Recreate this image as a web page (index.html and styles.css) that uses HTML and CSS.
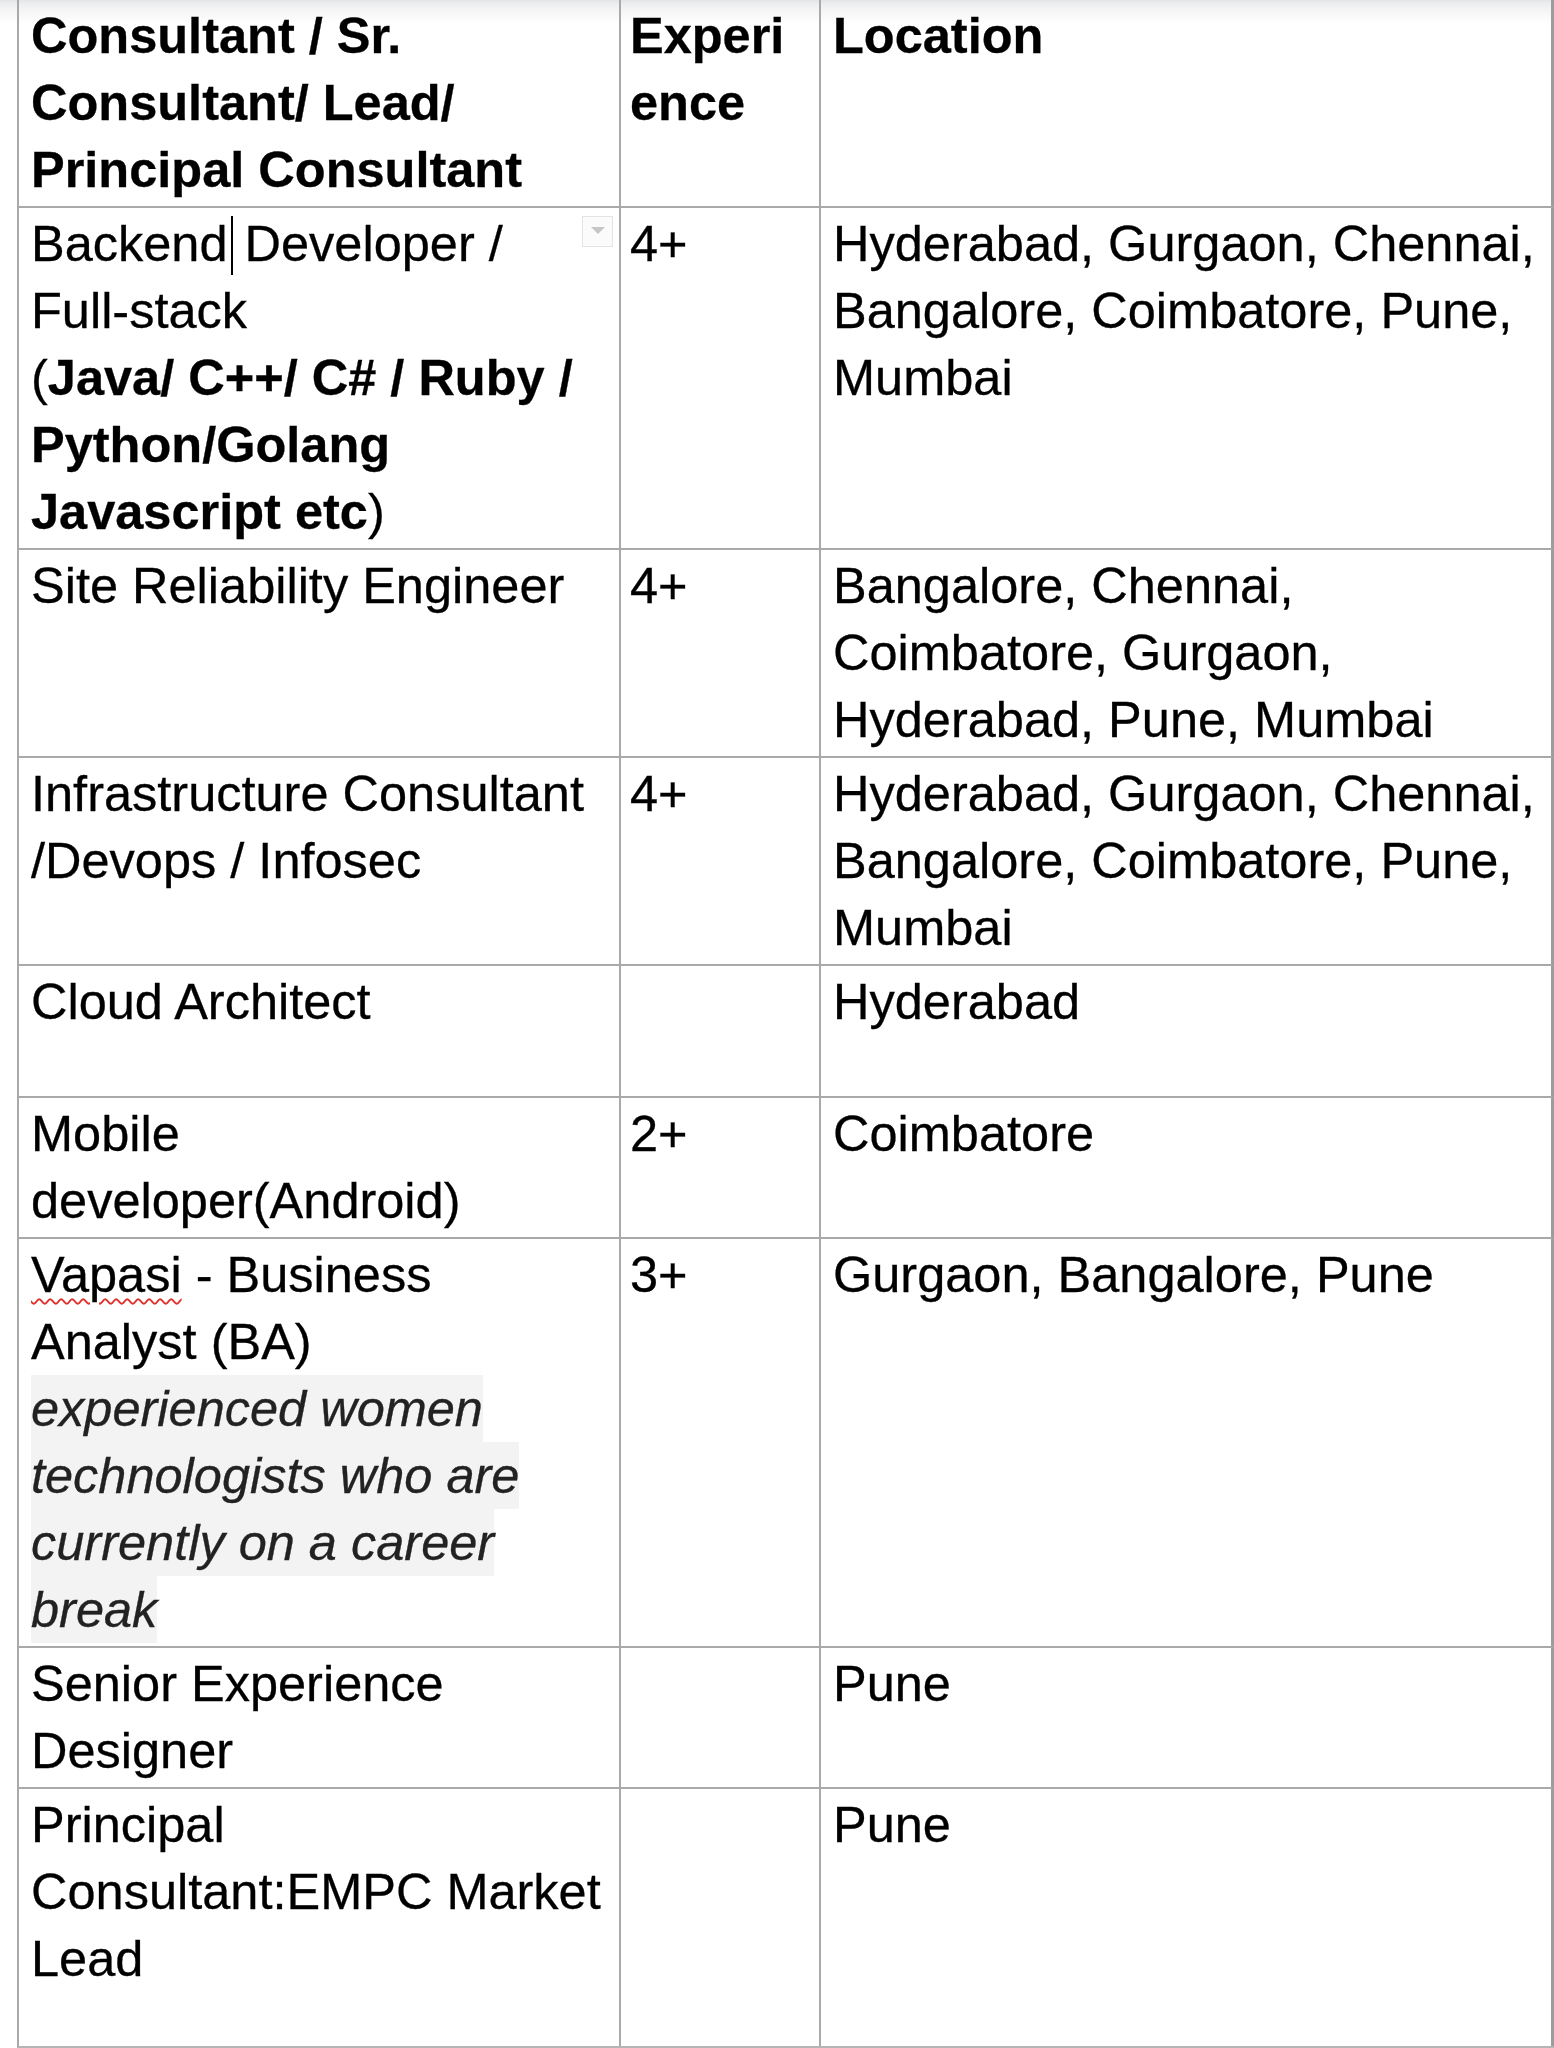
FILE: index.html
```html
<!DOCTYPE html>
<html lang="en">
<head>
<meta charset="utf-8">
<title>Openings</title>
<link rel="stylesheet" href="styles.css">
</head>
<body>
<div class="sheet">
  <div class="table">
    <div class="cell c1 head">Consultant / Sr. Consultant/ Lead/ Principal Consultant</div>
    <div class="cell c2 head break">Experience</div>
    <div class="cell c3 head">Location</div>

    <div class="cell c1 has-chip">
      <p>Backend<span class="caret"></span> Developer / Full-stack</p>
      <p>(<b>Java/ C++/ C# / Ruby / Python/Golang Javascript etc</b>)</p>
      <span class="chip"><span class="tri"></span></span>
    </div>
    <div class="cell c2">4+</div>
    <div class="cell c3">Hyderabad, Gurgaon, Chennai, Bangalore, Coimbatore, Pune, Mumbai</div>

    <div class="cell c1">Site Reliability Engineer</div>
    <div class="cell c2">4+</div>
    <div class="cell c3">Bangalore, Chennai, Coimbatore, Gurgaon, Hyderabad, Pune, Mumbai</div>

    <div class="cell c1">Infrastructure Consultant /Devops / Infosec</div>
    <div class="cell c2">4+</div>
    <div class="cell c3">Hyderabad, Gurgaon, Chennai, Bangalore, Coimbatore, Pune, Mumbai</div>

    <div class="cell c1"><p>Cloud Architect</p><p class="blank blank-a"></p></div>
    <div class="cell c2"></div>
    <div class="cell c3">Hyderabad</div>

    <div class="cell c1">Mobile developer(Android)</div>
    <div class="cell c2">2+</div>
    <div class="cell c3">Coimbatore</div>

    <div class="cell c1">
      <p><span class="spell">Vapasi</span> - Business Analyst (BA)</p>
      <p><span class="note">experienced women technologists who are currently on a career break</span></p>
    </div>
    <div class="cell c2">3+</div>
    <div class="cell c3">Gurgaon, Bangalore, Pune</div>

    <div class="cell c1">Senior Experience Designer</div>
    <div class="cell c2"></div>
    <div class="cell c3">Pune</div>

    <div class="cell c1"><p>Principal Consultant:EMPC Market Lead</p><p class="blank blank-b"></p></div>
    <div class="cell c2"></div>
    <div class="cell c3">Pune</div>
  </div>
</div>
</body>
</html>
```

FILE: styles.css
```css
* { box-sizing: border-box; }

html, body {
  margin: 0;
  padding: 0;
  background: #ffffff;
}

body {
  font-family: "Liberation Sans", Arial, sans-serif;
  font-size: 50.5px;
  line-height: 67px;
  color: #000;
  -webkit-text-stroke: 0.3px currentColor;
}

.sheet {
  padding-left: 17px;
  background:
    linear-gradient(to bottom, #e3e4e7 0px, #eceef0 4px, #f6f6f7 12px, #ffffff 24px) top left / 100% 24px no-repeat;
}

.table {
  display: grid;
  grid-template-columns: 602px 200px 733px;
  border-left: 2px solid #a9a9a9;
  border-bottom: 2px solid #b5b5b5;
}

.cell {
  padding-top: 2px;
  padding-bottom: 3px;
  border-right: 2px solid #a9a9a9;
  border-bottom: 2px solid #a9a9a9;
}

.table > .cell:nth-last-child(-n+3) {
  border-bottom: none;
}

.c3 { border-right-width: 3px; border-right-color: #9c9c9c; }

.c1 { padding-left: 12px; padding-right: 13px; }
.c2 { padding-left: 9px; padding-right: 14px; }
.c3 { padding-left: 12px; padding-right: 8px; }

.head { font-weight: bold; }
.break { overflow-wrap: anywhere; word-break: break-all; }

.cell p { margin: 0; }

.blank-a { height: 58px; }
.blank-b { height: 51px; }

.has-chip { position: relative; }

.caret {
  display: inline-block;
  width: 0;
  height: 59px;
  border-left: 2px solid #000;
  margin: 0 -2px 0 3px;
  vertical-align: -14px;
}

.chip {
  position: absolute;
  top: 8px;
  right: 6px;
  width: 31px;
  height: 31px;
  border: 1px solid #e4e4e4;
  background: #fbfbfb;
  display: flex;
  align-items: center;
  justify-content: center;
}

.tri {
  width: 0;
  height: 0;
  border-left: 7px solid transparent;
  border-right: 7px solid transparent;
  border-top: 7px solid #c6c6c6;
  margin-top: -2px;
}

.spell {
  text-decoration: underline wavy #e0322d;
  text-decoration-thickness: 1.5px;
  text-underline-offset: 6px;
}

.note {
  font-style: italic;
  color: #222;
  background: #f3f3f3;
  padding: 5px 0;
  -webkit-box-decoration-break: clone;
  box-decoration-break: clone;
}
```
